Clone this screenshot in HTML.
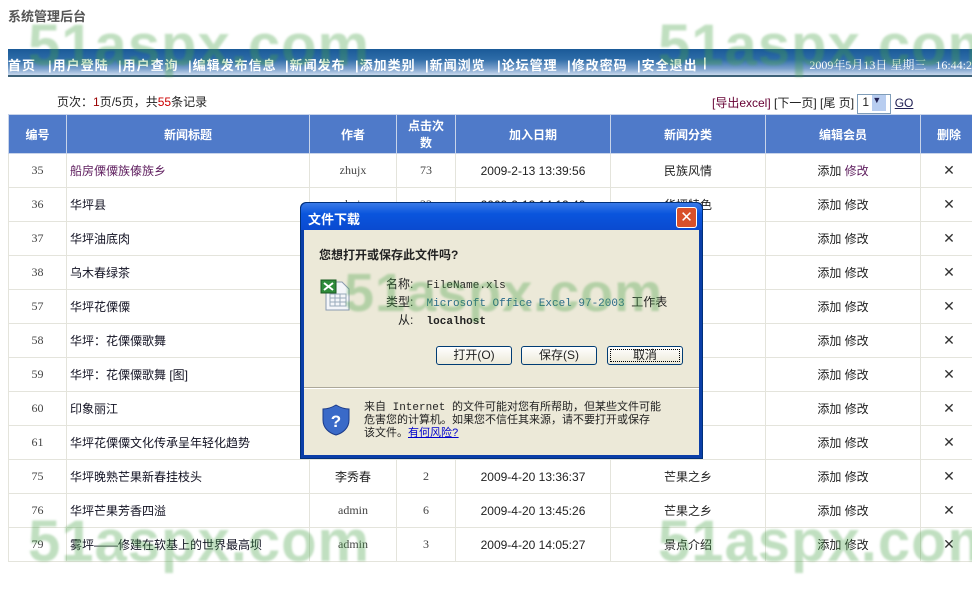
<!DOCTYPE html>
<html><head><meta charset="utf-8">
<style>
*{margin:0;padding:0;box-sizing:border-box}
body{width:972px;height:596px;background:#fff;position:relative;overflow:hidden;font-family:"Liberation Sans","Noto Sans CJK SC",sans-serif;font-size:12px;color:#222}
.title{position:absolute;left:8px;top:6px;font-size:13px;font-weight:bold;color:#555}
.nav{position:absolute;left:8px;top:49px;width:964px;height:28px;background:linear-gradient(#1a5a98 0%,#2e6ca8 40%,#7aa0cc 75%,#c8d8ec 100%);border-bottom:2px solid #3d6178}
.nav span{position:absolute;top:6px;color:#fff;font-weight:bold;font-size:13px;white-space:nowrap;letter-spacing:1px}
.nav .d{position:absolute;right:0;top:7px;color:#fff;font-family:"Liberation Serif","Noto Serif CJK SC",serif;font-size:12px;white-space:nowrap}
.pg{position:absolute;left:57px;top:93px;font-size:12px}
.pr{position:absolute;left:712px;top:94px;font-size:12px;color:#222}
table{position:absolute;left:8px;top:114px;border-collapse:collapse;width:970px}
td,th{border:1px solid #e4e4dc;text-align:center;height:34px;font-size:12px}
th{background:#4f7ac9;color:#fff;height:39px;border-color:#c8d4ea;font-weight:bold}
td.n{font-family:"Liberation Serif","Noto Serif CJK SC",serif;color:#444}
td.t{text-align:left;padding-left:3px;color:#112}
.x{font-size:14px;color:#333}
.wm{position:absolute;font-family:"Liberation Sans",sans-serif;font-weight:bold;font-size:58px;color:rgba(70,160,70,0.34);letter-spacing:1px;white-space:nowrap;filter:blur(1px)}
.dlg{position:absolute;left:300px;top:202px;width:403px;height:257px;background:#0a3ea8;border:1px solid #00307a;border-radius:6px 6px 0 0}
.tb{height:27px;background:linear-gradient(#3a7ae8,#0a55dd 40%,#0a4ad0);border-radius:6px 6px 0 0;color:#fff;font-weight:bold;font-size:13px;padding:6px 7px}
.cl{position:absolute;right:5px;top:4px;width:21px;height:21px;background:#d8502a;border:1px solid #fff;border-radius:3px;color:#fff;text-align:center;font-size:15px;line-height:19px}
.bd{position:absolute;left:3px;top:27px;right:3px;bottom:3px;background:#ece9d8}
.q{position:absolute;left:15px;top:16px;font-weight:bold;font-size:12px}
.f{position:absolute;font-family:"Liberation Mono","Noto Sans CJK SC",monospace;font-size:11px}
.f i{font-style:normal;font-family:"Liberation Sans","Noto Sans CJK SC",sans-serif;font-size:12px;color:#222}
.btn{position:absolute;top:116px;width:76px;height:19px;border:1px solid #003c74;border-radius:3px;background:linear-gradient(#fff,#ece9d8);text-align:center;font-size:12px;line-height:17px}
.sep{position:absolute;left:0;right:0;top:157px;border-top:1px solid #aca899;border-bottom:1px solid #fff}
.wt{position:absolute;left:60px;top:172px;font-size:11px;line-height:13px;font-family:"Liberation Mono","Noto Sans CJK SC",monospace}
</style></head><body>
<div class="title">系统管理后台</div>
<div class="nav">
<span style="left:0">首页</span><span style="left:40px">|用户登陆</span><span style="left:110px">|用户查询</span><span style="left:180px">|编辑发布信息</span><span style="left:277px">|新闻发布</span><span style="left:347px">|添加类别</span><span style="left:417px">|新闻浏览</span><span style="left:489px">|论坛管理</span><span style="left:559px">|修改密码</span><span style="left:629px">|安全退出</span><span style="left:695px">|</span>
<div class="d">2009年5月13日 星期三 &nbsp; 16:44:2</div></div>
<div class="pg">页次：<span style="color:#900">1</span>页/5页，共<span style="color:#c00">55</span>条记录</div>
<div class="pr"><span style="color:#603">[导出excel]</span> [下一页] [尾 页] <span style="display:inline-block;border:1px solid #7f9db9;width:34px;height:20px;vertical-align:middle;font-size:12px;padding-left:4px">1 <span style="display:inline-block;width:14px;height:16px;background:#b8cdf0;vertical-align:middle;font-size:9px;color:#225">▼</span></span> <u style="color:#225">GO</u></div>
<table>
<tr><th style="width:58px">编号</th><th style="width:243px">新闻标题</th><th style="width:87px">作者</th><th style="width:59px">点击次<br>数</th><th style="width:155px">加入日期</th><th style="width:155px">新闻分类</th><th style="width:155px">编辑会员</th><th>删除</th></tr>
<tr><td class="n">35</td><td class="t" style="color:#602060">船房傈僳族傣族乡</td><td class="n">zhujx</td><td class="n">73</td><td>2009-2-13 13:39:56</td><td>民族风情</td><td>添加 <span style="color:#602060">修改</span></td><td class="x">✕</td></tr>
<tr><td class="n">36</td><td class="t">华坪县</td><td class="n">zhujx</td><td class="n">22</td><td>2009-2-13 14:12:40</td><td>华坪特色</td><td>添加 修改</td><td class="x">✕</td></tr>
<tr><td class="n">37</td><td class="t">华坪油底肉</td><td></td><td></td><td></td><td>特色</td><td>添加 修改</td><td class="x">✕</td></tr>
<tr><td class="n">38</td><td class="t">乌木春绿茶</td><td></td><td></td><td></td><td>特色</td><td>添加 修改</td><td class="x">✕</td></tr>
<tr><td class="n">57</td><td class="t">华坪花傈僳</td><td></td><td></td><td></td><td>风情</td><td>添加 修改</td><td class="x">✕</td></tr>
<tr><td class="n">58</td><td class="t">华坪：花傈僳歌舞</td><td></td><td></td><td></td><td>风情</td><td>添加 修改</td><td class="x">✕</td></tr>
<tr><td class="n">59</td><td class="t">华坪：花傈僳歌舞 [图]</td><td></td><td></td><td></td><td>风情</td><td>添加 修改</td><td class="x">✕</td></tr>
<tr><td class="n">60</td><td class="t">印象丽江</td><td></td><td></td><td></td><td>特色</td><td>添加 修改</td><td class="x">✕</td></tr>
<tr><td class="n">61</td><td class="t">华坪花傈僳文化传承呈年轻化趋势</td><td></td><td></td><td></td><td>风情</td><td>添加 修改</td><td class="x">✕</td></tr>
<tr><td class="n">75</td><td class="t">华坪晚熟芒果新春挂枝头</td><td>李秀春</td><td class="n">2</td><td>2009-4-20 13:36:37</td><td>芒果之乡</td><td>添加 修改</td><td class="x">✕</td></tr>
<tr><td class="n">76</td><td class="t">华坪芒果芳香四溢</td><td class="n">admin</td><td class="n">6</td><td>2009-4-20 13:45:26</td><td>芒果之乡</td><td>添加 修改</td><td class="x">✕</td></tr>
<tr><td class="n">79</td><td class="t">雾坪——修建在软基上的世界最高坝</td><td class="n">admin</td><td class="n">3</td><td>2009-4-20 14:05:27</td><td>景点介绍</td><td>添加 修改</td><td class="x">✕</td></tr>
</table>
<div class="wm" style="left:28px;top:12px">51aspx.com</div>
<div class="wm" style="left:658px;top:12px">51aspx.com</div>
<div class="wm" style="left:28px;top:508px">51aspx.com</div>
<div class="wm" style="left:658px;top:508px">51aspx.com</div>
<div class="dlg">
<div class="tb">文件下载</div><div class="cl">✕</div>
<div class="bd">
<div class="q">您想打开或保存此文件吗?</div>
<svg style="position:absolute;left:16px;top:48px" width="32" height="34" viewBox="0 0 32 34"><path d="M6 4h16l7 7v21H6z" fill="#f4f6fa" stroke="#8a9ab0"/><path d="M10 16h16v12H10z" fill="none" stroke="#9ab"/><path d="M10 20h16M10 24h16M15 16v12M20 16v12" stroke="#9ab"/><rect x="1" y="2" width="15" height="13" fill="#2e8b3a" stroke="#1a5a22"/><path d="M4 5l9 7M13 5l-9 7" stroke="#fff" stroke-width="2"/></svg>
<div class="f" style="left:82px;top:45px"><i>名称:</i> &nbsp;FileName.xls</div>
<div class="f" style="left:82px;top:63px"><i>类型:</i> &nbsp;<span style="color:#2a6a8a">Microsoft Office Excel 97-2003</span> <i>工作表</i></div>
<div class="f" style="left:94px;top:81px"><i>从:</i> &nbsp;<b>localhost</b></div>
<div class="btn" style="left:132px">打开(O)</div>
<div class="btn" style="left:217px">保存(S)</div>
<div class="btn" style="left:303px;outline:1px dotted #000;outline-offset:-4px">取消</div>
<div class="sep"></div>
<svg style="position:absolute;left:18px;top:174px" width="28" height="32" viewBox="0 0 28 32"><path d="M14 1C9 4 5 5 1 5v11c0 8 6 13 13 15 7-2 13-7 13-15V5c-4 0-8-1-13-4z" fill="#3a6ac8" stroke="#1a3a88"/><text x="14" y="23" font-size="17" font-weight="bold" fill="#fff" text-anchor="middle" font-family="Liberation Sans">?</text></svg>
<div class="wt">来自 Internet 的文件可能对您有所帮助，但某些文件可能<br>危害您的计算机。如果您不信任其来源，请不要打开或保存<br>该文件。<u style="color:#00c">有何风险?</u></div>
<div class="wm" style="left:40px;top:32px;font-size:54px">51aspx.com</div>
</div>
</div>
</body></html>
